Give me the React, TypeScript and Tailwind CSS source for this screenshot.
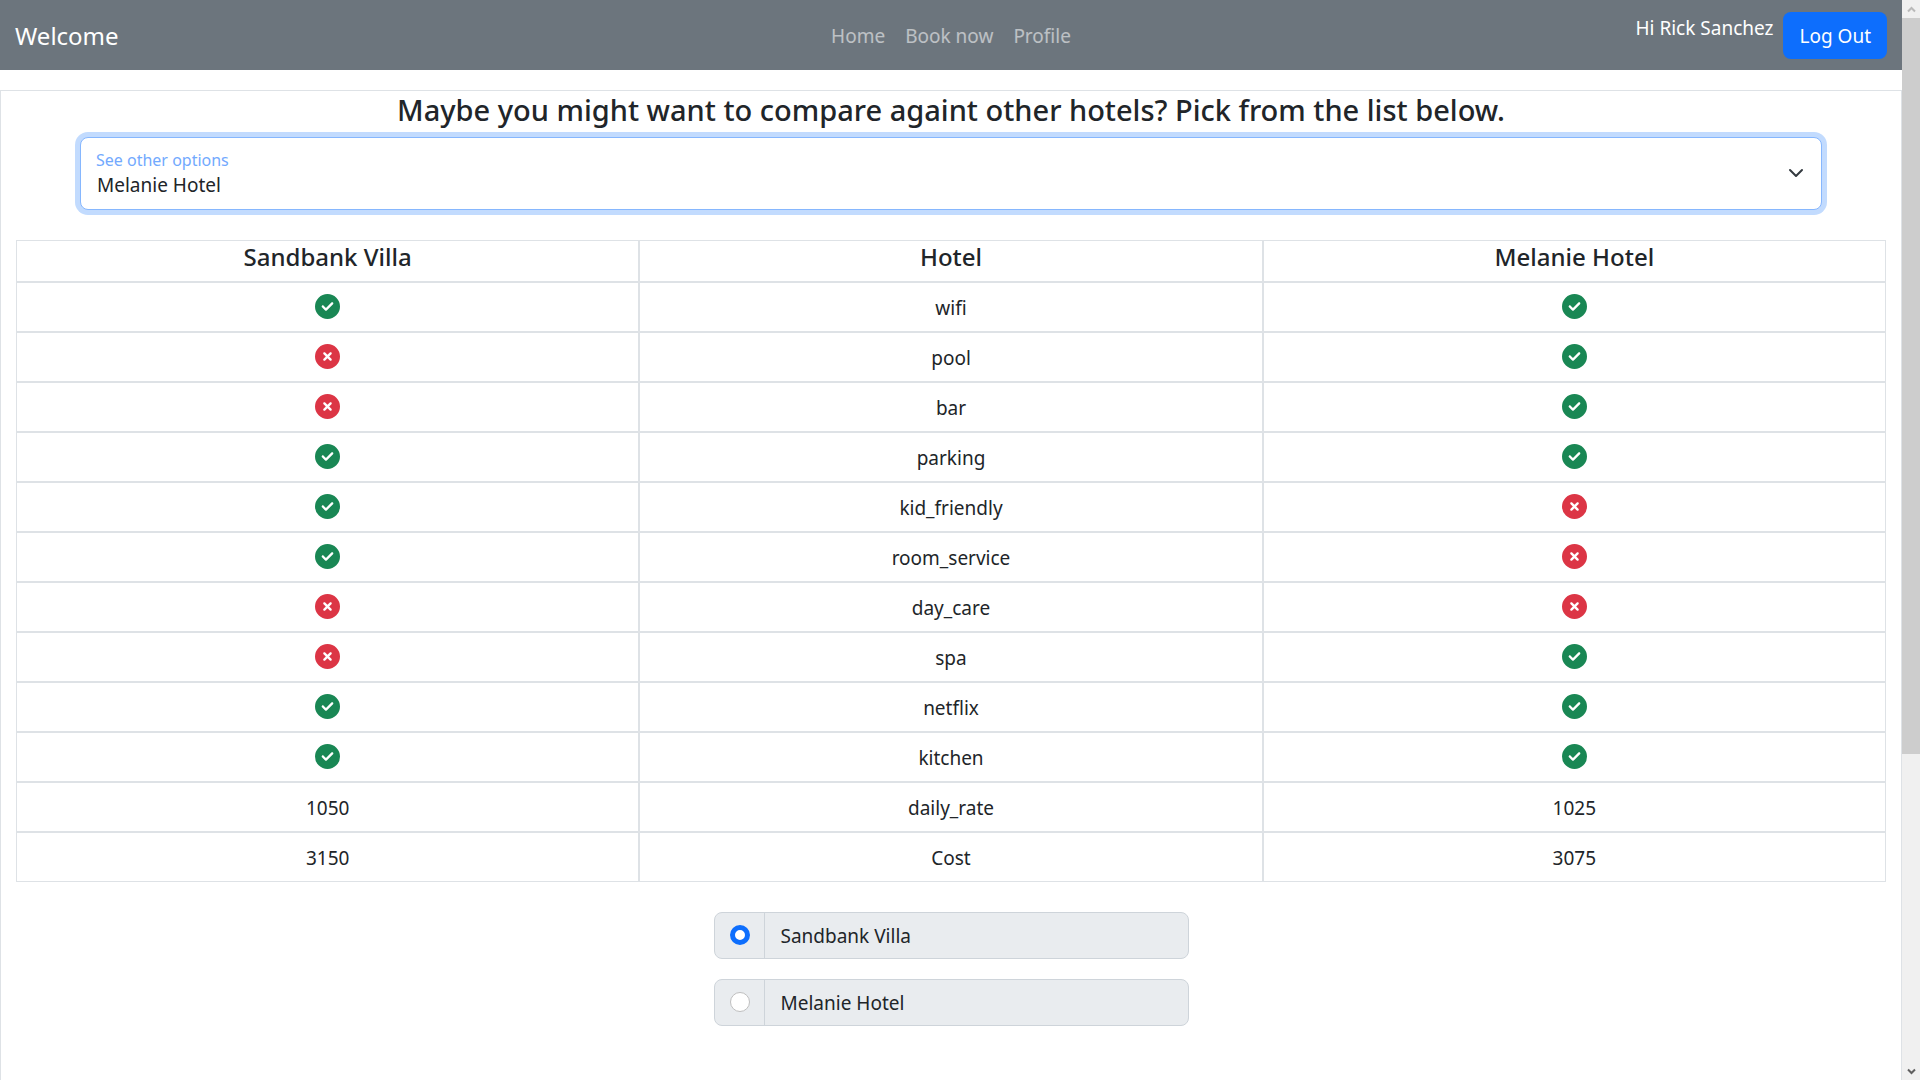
import { useState } from "react";
import { FaCircleCheck, FaCircleXmark } from "react-icons/fa6";

type Value = boolean | number;

const hotels = ["Sandbank Villa", "Melanie Hotel"];

const rows: { name: string; first: Value; second: Value }[] = [
  { name: "wifi", first: true, second: true },
  { name: "pool", first: false, second: true },
  { name: "bar", first: false, second: true },
  { name: "parking", first: true, second: true },
  { name: "kid_friendly", first: true, second: false },
  { name: "room_service", first: true, second: false },
  { name: "day_care", first: false, second: false },
  { name: "spa", first: false, second: true },
  { name: "netflix", first: true, second: true },
  { name: "kitchen", first: true, second: true },
  { name: "daily_rate", first: 1050, second: 1025 },
  { name: "Cost", first: 3150, second: 3075 },
];

function Cell({ value }: { value: Value | string }) {
  if (typeof value !== "boolean") {
    return <td className="h-[50px] border border-[#dee2e6] p-0 pt-0.5">{value}</td>;
  }
  return (
    <td className="h-[50px] border border-[#dee2e6] p-0 pb-0.5">
      {value ? (
        <FaCircleCheck aria-label="yes" className="mx-auto size-[25px] text-[#198754]" />
      ) : (
        <FaCircleXmark aria-label="no" className="mx-auto size-[25px] text-[#dc3545]" />
      )}
    </td>
  );
}

function Header() {
  return (
    <header className="grid h-[70px] shrink-0 grid-cols-[1fr_auto_1fr] items-center bg-[#6c757d] px-[15px]">
      <a href="#" className="pt-0.5 text-[24px] text-white">
        Welcome
      </a>
      <nav className="flex gap-5 pt-0.5 text-white/55">
        <a href="#home">Home</a>
        <a href="#book">Book now</a>
        <a href="#profile">Profile</a>
      </nav>
      <div className="flex items-start justify-end gap-[10px]">
        <span className="pt-px text-white">Hi Rick Sanchez</span>
        <button type="button" className="h-[47px] rounded-lg bg-[#0d6efd] px-4 pt-0.5 text-white">
          Log Out
        </button>
      </div>
    </header>
  );
}

function ScrollTrack() {
  return (
    <div aria-hidden="true" className="flex w-[18px] shrink-0 flex-col items-center bg-[#f0f0f0]">
      <svg viewBox="0 0 18 18" className="size-[18px] shrink-0" fill="none" stroke="#b9b9b9" strokeWidth="2">
        <path d="M6 11.5 9.5 8 13 11.5" />
      </svg>
      <div className="flex w-full grow flex-col">
        <div className="w-full basis-[70.5%] bg-[#cdcdcd]" />
      </div>
      <svg viewBox="0 0 18 18" className="size-[18px] shrink-0" fill="none" stroke="#606060" strokeWidth="2">
        <path d="M6 7.5 9.5 11 13 7.5" />
      </svg>
    </div>
  );
}

export default function App() {
  const [other, setOther] = useState("Melanie Hotel");
  const [picked, setPicked] = useState("Sandbank Villa");

  return (
    <div className="flex h-screen overflow-hidden bg-white font-['Noto_Sans',sans-serif] text-[19px] leading-[30px] text-[#212529]">
      <div className="flex min-w-0 flex-1 flex-col">
        <Header />
        <main className="mt-5 grow border border-b-0 border-[#dee2e6] px-[15px]">
          <h1 className="text-center text-[29px] leading-[38px] font-medium">
            Maybe you might want to compare againt other hotels? Pick from the list below.
          </h1>

          <div className="relative mx-16 mt-2">
            <select
              id="other-hotel"
              value={other}
              onChange={(e) => setOther(e.target.value)}
              className="block h-[73px] w-full appearance-none rounded-lg border border-[#86b7fe] bg-white px-4 pt-[22px] pb-0 leading-[30px] ring-[5px] ring-[#c2dbfe] outline-none"
            >
              {hotels.map((h) => (
                <option key={h}>{h}</option>
              ))}
            </select>
            <label htmlFor="other-hotel" className="pointer-events-none absolute top-[9px] left-4 text-[16px] leading-7 text-[#72a9fe]">
              See other options
            </label>
            <svg
              viewBox="0 0 16 16"
              className="pointer-events-none absolute top-7 right-[18px] size-4"
              fill="none"
              stroke="#343a40"
              strokeWidth="2"
              strokeLinecap="round"
              strokeLinejoin="round"
            >
              <path d="m2 5 6 6 6-6" />
            </svg>
          </div>

          <table className="mt-[30px] w-full table-fixed border-separate border-spacing-0 text-center">
            <thead>
              <tr>
                {[hotels[0], "Hotel", other].map((h, i) => (
                  <th key={i} scope="col" className="h-[42px] border border-[#dee2e6] p-0 pb-2 text-[24px] leading-8 font-medium">
                    {h}
                  </th>
                ))}
              </tr>
            </thead>
            <tbody>
              {rows.map((row) => (
                <tr key={row.name}>
                  <Cell value={row.first} />
                  <Cell value={row.name} />
                  <Cell value={row.second} />
                </tr>
              ))}
            </tbody>
          </table>

          <div className="mx-auto mt-[30px] flex w-1/4 min-w-[475px] flex-col gap-5">
            {hotels.map((h) => (
              <label key={h} className="flex h-[47px] items-stretch overflow-hidden rounded-lg border border-[#ced4da] bg-[#e9ecef]">
                <span className="flex w-[50px] items-center border-r border-[#ced4da] pb-0.5 pl-[15px]">
                  <input
                    type="radio"
                    name="hotel"
                    checked={picked === h}
                    onChange={() => setPicked(h)}
                    className="size-5 appearance-none rounded-full border border-[#bfbfbf] bg-white checked:border-[5px] checked:border-[#0d6efd]"
                  />
                </span>
                <span className="flex items-center px-4">{h}</span>
              </label>
            ))}
          </div>
        </main>
      </div>
      <ScrollTrack />
    </div>
  );
}
